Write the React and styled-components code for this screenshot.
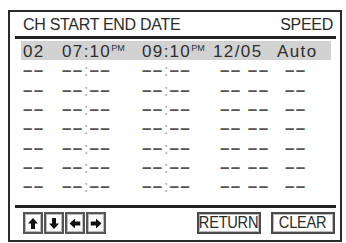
import React from 'react';
import styled, { createGlobalStyle } from 'styled-components';

const GlobalStyle = createGlobalStyle`
  html, body {
    margin: 0;
    padding: 0;
    background: #fff;
  }
  body {
    font-family: "Liberation Sans", Arial, sans-serif;
    color: #333;
  }
`;

const Page = styled.div`
  padding: 10px 0 0 8px;
`;

const Frame = styled.div`
  box-sizing: border-box;
  width: 334px;
  height: 232px;
  border: 2px solid #2a2a2a;
  padding: 0 4px 0 5px;
  display: flex;
  flex-direction: column;
`;

const Header = styled.div`
  height: 27px;
  display: flex;
  align-items: center;
  justify-content: space-between;
  padding: 1px 3px 0 8px;
  box-sizing: border-box;
  border-bottom: 3px solid #222;
  font-size: 16px;
  color: #2a2a2a;
  letter-spacing: -0.3px;
`;

const List = styled.div`
  padding: 2px 0 0;
  height: 166px;
  box-sizing: border-box;
`;

const Row = styled.div`
  display: grid;
  grid-template-columns: 39px 80px 71px 64px 1fr;
  align-items: center;
  box-sizing: border-box;
  height: 19.3px;
  padding: 3px 0 0 2px;
  margin: 0 5px 0 6px;
  background: ${(p) => (p.$active ? '#d2d2d2' : 'transparent')};
  font-size: 17px;
  letter-spacing: 1.4px;
  font-weight: ${(p) => (p.$active ? 'normal' : 'bold')};
  color: ${(p) => (p.$active ? '#2e2e2e' : '#555')};
  white-space: nowrap;
`;

const Cell = styled.span`
  padding-left: ${(p) => p.$shift || 0}px;
  line-height: 16px;
`;

const Colon = styled.span`
  color: ${(p) => (p.$dim ? '#aaa' : 'inherit')};
  font-weight: normal;
  letter-spacing: 1px;
`;

const Meridian = styled.sup`
  font-size: 9px;
  letter-spacing: 0;
  vertical-align: 6px;
  line-height: 0;
`;

const Footer = styled.div`
  border-top: 3px solid #222;
  padding: 4px 1px 0 8px;
  display: flex;
  align-items: center;
`;

const ArrowGroup = styled.div`
  display: flex;
  gap: 1px;
`;

const ArrowKey = styled.div`
  box-sizing: border-box;
  width: 20px;
  height: 22px;
  border: 2px solid #555;
  box-shadow: inset 0 0 0 1px #bbb;
  display: flex;
  align-items: center;
  justify-content: center;
`;

const TextKey = styled.div`
  box-sizing: border-box;
  width: ${(p) => p.$w}px;
  height: 22px;
  margin-left: ${(p) => p.$ml || 0};
  border: 2px solid #4a4a4a;
  box-shadow: inset 0 0 0 1px #bbb;
  display: flex;
  align-items: center;
  justify-content: center;
  color: #2a2a2a;
`;

const KeyLabel = styled.span`
  font-size: 17px;
  letter-spacing: -0.3px;
  transform: scaleX(0.86);
  white-space: nowrap;
`;

const Arrow = ({ rotate }) => (
  <svg width="10" height="11" viewBox="0 0 10 11" style={{ transform: `rotate(${rotate}deg)` }}>
    <polygon points="5,0 10,5.5 7,5.5 7,11 3,11 3,5.5 0,5.5" fill="#111" />
  </svg>
);

const D = '––';

const EmptyRow = () => (
  <Row>
    <Cell>{D}</Cell>
    <Cell>{D}<Colon $dim>:</Colon>{D}</Cell>
    <Cell>{D}<Colon $dim>:</Colon>{D}</Cell>
    <Cell $shift={7}>{D} {D}</Cell>
    <Cell $shift={8}>{D}</Cell>
  </Row>
);

const App = () => (
  <Page>
    <GlobalStyle />
    <Frame>
      <Header>
        <span>CH START END DATE</span>
        <span>SPEED</span>
      </Header>
      <List>
        <Row $active>
          <Cell>02</Cell>
          <Cell>07<Colon>:</Colon>10<Meridian>PM</Meridian></Cell>
          <Cell>09<Colon>:</Colon>10<Meridian>PM</Meridian></Cell>
          <Cell>12/05</Cell>
          <Cell>Auto</Cell>
        </Row>
        {Array.from({ length: 7 }).map((_, i) => <EmptyRow key={i} />)}
      </List>
      <Footer>
        <ArrowGroup>
          <ArrowKey><Arrow rotate={0} /></ArrowKey>
          <ArrowKey><Arrow rotate={180} /></ArrowKey>
          <ArrowKey><Arrow rotate={270} /></ArrowKey>
          <ArrowKey><Arrow rotate={90} /></ArrowKey>
        </ArrowGroup>
        <TextKey $w={64} $ml="auto"><KeyLabel>RETURN</KeyLabel></TextKey>
        <TextKey $w={64} $ml="10px"><KeyLabel>CLEAR</KeyLabel></TextKey>
      </Footer>
    </Frame>
  </Page>
);

export default App;
